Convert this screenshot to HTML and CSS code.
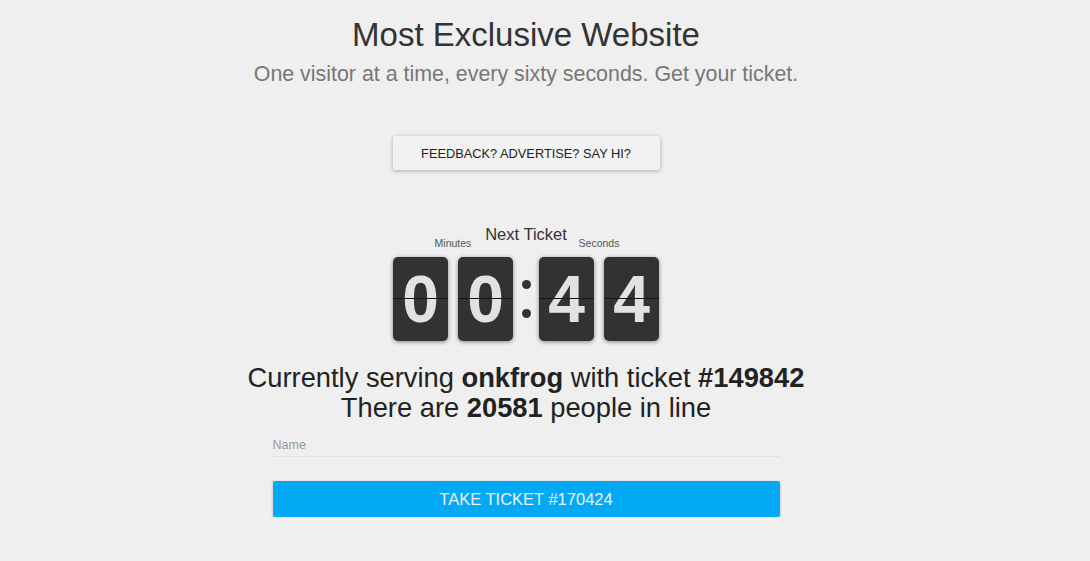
FILE: index.html
```html
<!DOCTYPE html>
<html>
<head>
<meta charset="utf-8">
<link rel="stylesheet" href="styles.css">
</head>
<body>
<div class="page">
  <h1 class="title">Most Exclusive Website</h1>
  <p class="subtitle">One visitor at a time, every sixty seconds. Get your ticket.</p>
  <button class="feedback">FEEDBACK? ADVERTISE? SAY HI?</button>
  <div class="timer">
    <div class="timer-head">
      <span class="unit">Minutes</span>
      <span class="next">Next Ticket</span>
      <span class="unit">Seconds</span>
    </div>
    <div class="flips">
      <div class="group">
        <div class="card">0</div>
        <div class="card">0</div>
      </div>
      <div class="colon"><span class="dot"></span><span class="dot"></span></div>
      <div class="group">
        <div class="card">4</div>
        <div class="card">4</div>
      </div>
    </div>
  </div>
  <p class="status">Currently serving <b>onkfrog</b> with ticket <b>#149842</b><br>There are <b>20581</b> people in line</p>
  <form class="ticket-form">
    <input class="name" type="text" placeholder="Name">
    <button class="take" type="button">TAKE TICKET #170424</button>
  </form>
</div>
</body>
</html>
```
FILE: styles.css
```css
html, body {
  margin: 0;
  padding: 0;
  background: #efefef;
}
body {
  font-family: "Liberation Sans", Arial, sans-serif;
  color: #333;
}
.page {
  width: 1052px;
  display: flex;
  flex-direction: column;
  align-items: center;
  padding-top: 16px;
}
.title {
  margin: 0;
  font-size: 33px;
  font-weight: normal;
  line-height: 38px;
  color: #333;
}
.subtitle {
  margin: 8px 0 0;
  font-size: 21.4px;
  line-height: 25px;
  color: #777;
}
.feedback {
  margin-top: 49px;
  width: 267px;
  height: 34px;
  border: none;
  border-radius: 2px;
  background: #f2f2f2;
  box-shadow: 0 1px 4px rgba(0,0,0,0.3);
  font-family: "Liberation Sans", Arial, sans-serif;
  font-size: 12.8px;
  color: #222;
  padding: 0;
}
.timer {
  margin-top: 54px;
  display: flex;
  flex-direction: column;
  align-items: center;
}
.timer-head {
  display: flex;
  align-items: flex-end;
  width: 266px;
}
.unit {
  flex: 0 0 120px;
  min-width: 0;
  font-size: 10.5px;
  color: #555;
  text-align: center;
  line-height: 12px;
}
.next {
  flex: 0 0 26px;
  min-width: 0;
  display: flex;
  justify-content: center;
  font-size: 16.5px;
  line-height: 20px;
  margin-bottom: 5px;
  color: #333;
  white-space: nowrap;
}
.flips {
  margin-top: 8px;
  display: flex;
  align-items: center;
}
.group {
  display: flex;
  gap: 10px;
}
.card {
  position: relative;
  width: 55px;
  height: 84px;
  background: #323232;
  border-radius: 5px;
  box-shadow: 0 1px 4px rgba(0,0,0,0.45);
  color: #e2e2e2;
  font-size: 66px;
  font-weight: bold;
  line-height: 84px;
  text-align: center;
}
.card::after {
  content: "";
  position: absolute;
  left: 0;
  right: 0;
  top: 41px;
  height: 1px;
  background: #141414;
}
.colon {
  width: 26px;
  display: flex;
  flex-direction: column;
  align-items: center;
  gap: 20px;
}
.dot {
  width: 9px;
  height: 9px;
  border-radius: 50%;
  background: #333;
}
.status {
  margin: 22px 0 0;
  font-size: 27.3px;
  line-height: 30px;
  text-align: center;
  color: #222;
}
.ticket-form {
  margin-top: 11px;
  width: 507px;
  display: flex;
  flex-direction: column;
}
.name {
  border: none;
  border-bottom: 1px solid #e2e2e2;
  background: transparent;
  font-family: "Liberation Sans", Arial, sans-serif;
  font-size: 12.5px;
  height: 22px;
  padding: 0;
  outline: none;
}
.name::placeholder {
  color: #9a9a9a;
}
.take {
  margin-top: 24px;
  height: 36px;
  border: none;
  border-radius: 2px;
  background: #03a9f4;
  color: #e8f6ff;
  font-family: "Liberation Sans", Arial, sans-serif;
  font-size: 16.5px;
  box-shadow: 0 1px 3px rgba(0,0,0,0.25);
  padding: 0;
}
```
